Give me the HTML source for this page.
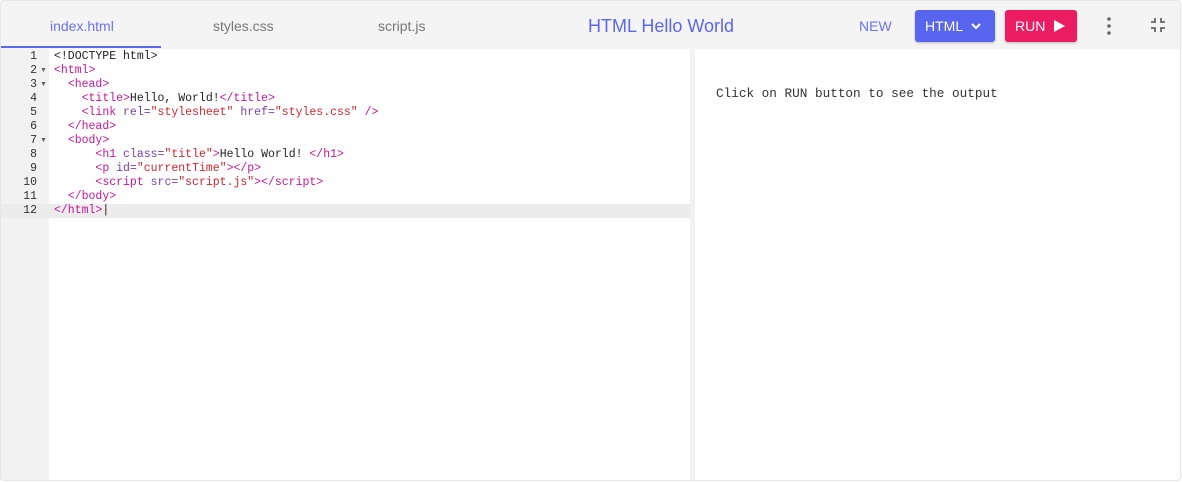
<!DOCTYPE html>
<html><head><style>
*{margin:0;padding:0;box-sizing:border-box}
body{width:1182px;height:482px;background:#fff;font-family:"Liberation Sans",sans-serif;overflow:hidden;position:relative}
.wrap{position:absolute;left:0;top:0;width:1181px;height:481px;border:1px solid #e6e6e6;border-radius:4px;overflow:hidden}
.hdr{position:absolute;left:0;top:0;width:100%;height:48px;background:#f4f4f4}
.tab{position:absolute;top:17px;font-size:14px;color:#777}
.ul{position:absolute;left:0;top:45px;width:160px;height:2px;background:#5a67ef}
.title{position:absolute;left:587px;top:15px;font-size:18px;color:#5a67ef}
.new{position:absolute;left:858px;top:17px;font-size:14px;color:#6a74f0}
.btn{position:absolute;top:9px;height:32px;border-radius:3px;color:#fff;font-size:14px;box-shadow:0 1px 2px rgba(0,0,0,.25);display:flex;align-items:center}
.gut{position:absolute;left:0;top:48px;width:48px;height:434px;background:#f2f2f2}
.div{position:absolute;left:689px;top:48px;width:5px;height:434px;background:#f2f2f2}
.hl{position:absolute;left:0;top:203px;width:689px;height:14px;background:#ececec}
.code{position:absolute;top:49px;font-family:"Liberation Mono",monospace;font-size:11.5px;line-height:14px;white-space:pre;color:#222}
.nums{left:0;width:36px;text-align:right;color:#333}
.t{color:#c5169c}.a{color:#7b3fb0}.s{color:#d0262e}
.out{position:absolute;left:715px;top:85px;font-family:"Liberation Mono",monospace;font-size:12.7px;color:#333}
.fold{position:absolute;left:39px;font-size:7px;color:#666}
</style></head><body><div class="wrap">
<div class="hdr">
<div class="tab" style="left:49px;color:#6a74f0">index.html</div>
<div class="tab" style="left:212px">styles.css</div>
<div class="tab" style="left:377px">script.js</div>
<div class="ul"></div>
<div class="title">HTML Hello World</div>
<div class="new">NEW</div>
<div class="btn" style="left:914px;width:80px;background:#5866ef;padding-left:10px">HTML <svg width="14" height="14" viewBox="0 0 14 14" style="margin-left:6px"><path d="M3 5l4 4 4-4" stroke="#fff" stroke-width="2" fill="none"/></svg></div>
<div class="btn" style="left:1004px;width:72px;background:#ec1c63;padding-left:10px">RUN <svg width="14" height="14" viewBox="0 0 14 14" style="margin-left:7px"><path d="M2 1L13 7 2 13Z" fill="#fff"/></svg></div>
<svg style="position:absolute;left:1104px;top:15px" width="8" height="20"><circle cx="4" cy="3" r="1.8" fill="#666"/><circle cx="4" cy="10" r="1.8" fill="#666"/><circle cx="4" cy="17" r="1.8" fill="#666"/></svg>
<svg style="position:absolute;left:1149px;top:16px" width="16" height="16" viewBox="0 0 16 16"><path d="M5 1v4H1M11 1v4h4M5 15v-4H1M11 15v-4h4" stroke="#666" stroke-width="1.8" fill="none"/></svg>
</div>
<div class="gut"></div>
<div class="hl"></div>
<div class="div"></div>
<div class="code nums">1
2
3
4
5
6
7
8
9
10
11
12</div>
<div class="fold" style="top:66px">▼</div><div class="fold" style="top:80px">▼</div><div class="fold" style="top:136px">▼</div>
<div class="code" style="left:53px">&lt;!DOCTYPE html&gt;
<span class="t">&lt;html&gt;</span>
  <span class="t">&lt;head&gt;</span>
    <span class="t">&lt;title&gt;</span>Hello, World!<span class="t">&lt;/title&gt;</span>
    <span class="t">&lt;link</span> <span class="a">rel=</span><span class="s">"stylesheet"</span> <span class="a">href=</span><span class="s">"styles.css"</span> <span class="t">/&gt;</span>
  <span class="t">&lt;/head&gt;</span>
  <span class="t">&lt;body&gt;</span>
      <span class="t">&lt;h1</span> <span class="a">class=</span><span class="s">"title"</span><span class="t">&gt;</span>Hello World! <span class="t">&lt;/h1&gt;</span>
      <span class="t">&lt;p</span> <span class="a">id=</span><span class="s">"currentTime"</span><span class="t">&gt;&lt;/p&gt;</span>
      <span class="t">&lt;script</span> <span class="a">src=</span><span class="s">"script.js"</span><span class="t">&gt;&lt;/script&gt;</span>
  <span class="t">&lt;/body&gt;</span>
<span class="t">&lt;/html&gt;</span>|</div>
<div class="out">Click on RUN button to see the output</div>
</div></body></html>
